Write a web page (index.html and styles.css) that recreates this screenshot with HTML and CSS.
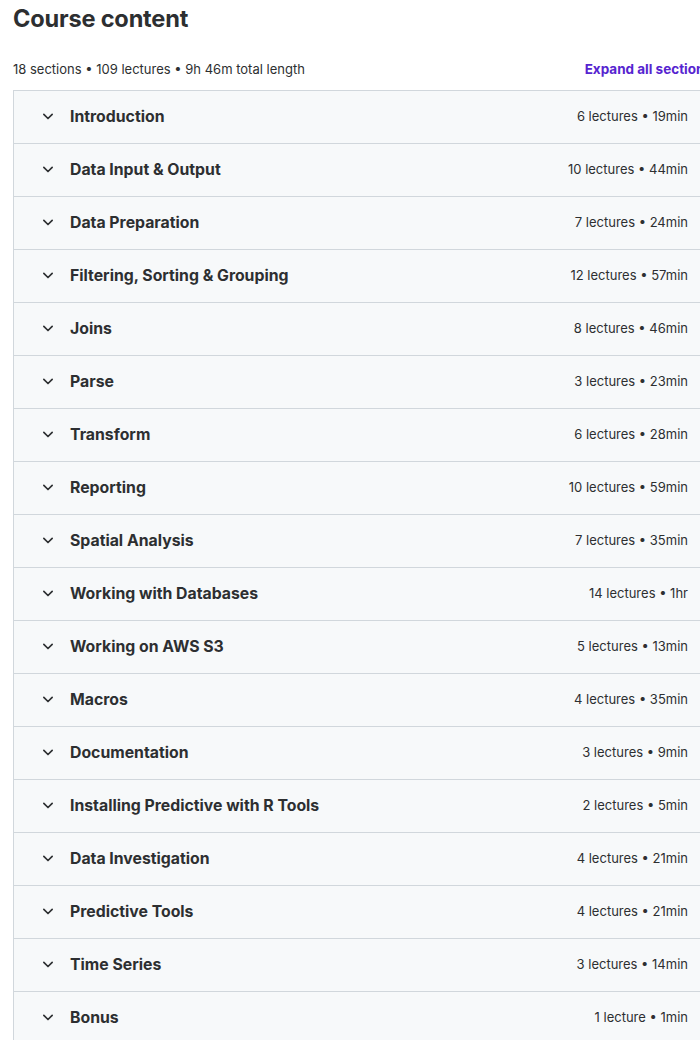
FILE: index.html
```html
<!DOCTYPE html>
<html>
<head>
<meta charset="utf-8">
<link rel="stylesheet" href="styles.css">
</head>
<body>
<div class="page">
  <h2 class="title">Course content</h2>
  <div class="summary">
    <span class="meta">18 sections • 109 lectures • 9h 46m total length</span>
    <button class="expand">Expand all sections</button>
  </div>
  <div class="accordion">
    <div class="row"><span class="chev"><svg viewBox="0 0 24 24"><path d="M7 10l5 5 5-5"/></svg></span><span class="name">Introduction</span><span class="info">6 lectures • 19min</span></div>
    <div class="row"><span class="chev"><svg viewBox="0 0 24 24"><path d="M7 10l5 5 5-5"/></svg></span><span class="name">Data Input &amp; Output</span><span class="info">10 lectures • 44min</span></div>
    <div class="row"><span class="chev"><svg viewBox="0 0 24 24"><path d="M7 10l5 5 5-5"/></svg></span><span class="name">Data Preparation</span><span class="info">7 lectures • 24min</span></div>
    <div class="row"><span class="chev"><svg viewBox="0 0 24 24"><path d="M7 10l5 5 5-5"/></svg></span><span class="name">Filtering, Sorting &amp; Grouping</span><span class="info">12 lectures • 57min</span></div>
    <div class="row"><span class="chev"><svg viewBox="0 0 24 24"><path d="M7 10l5 5 5-5"/></svg></span><span class="name">Joins</span><span class="info">8 lectures • 46min</span></div>
    <div class="row"><span class="chev"><svg viewBox="0 0 24 24"><path d="M7 10l5 5 5-5"/></svg></span><span class="name">Parse</span><span class="info">3 lectures • 23min</span></div>
    <div class="row"><span class="chev"><svg viewBox="0 0 24 24"><path d="M7 10l5 5 5-5"/></svg></span><span class="name">Transform</span><span class="info">6 lectures • 28min</span></div>
    <div class="row"><span class="chev"><svg viewBox="0 0 24 24"><path d="M7 10l5 5 5-5"/></svg></span><span class="name">Reporting</span><span class="info">10 lectures • 59min</span></div>
    <div class="row"><span class="chev"><svg viewBox="0 0 24 24"><path d="M7 10l5 5 5-5"/></svg></span><span class="name">Spatial Analysis</span><span class="info">7 lectures • 35min</span></div>
    <div class="row"><span class="chev"><svg viewBox="0 0 24 24"><path d="M7 10l5 5 5-5"/></svg></span><span class="name">Working with Databases</span><span class="info">14 lectures • 1hr</span></div>
    <div class="row"><span class="chev"><svg viewBox="0 0 24 24"><path d="M7 10l5 5 5-5"/></svg></span><span class="name">Working on AWS S3</span><span class="info">5 lectures • 13min</span></div>
    <div class="row"><span class="chev"><svg viewBox="0 0 24 24"><path d="M7 10l5 5 5-5"/></svg></span><span class="name">Macros</span><span class="info">4 lectures • 35min</span></div>
    <div class="row"><span class="chev"><svg viewBox="0 0 24 24"><path d="M7 10l5 5 5-5"/></svg></span><span class="name">Documentation</span><span class="info">3 lectures • 9min</span></div>
    <div class="row"><span class="chev"><svg viewBox="0 0 24 24"><path d="M7 10l5 5 5-5"/></svg></span><span class="name">Installing Predictive with R Tools</span><span class="info">2 lectures • 5min</span></div>
    <div class="row"><span class="chev"><svg viewBox="0 0 24 24"><path d="M7 10l5 5 5-5"/></svg></span><span class="name">Data Investigation</span><span class="info">4 lectures • 21min</span></div>
    <div class="row"><span class="chev"><svg viewBox="0 0 24 24"><path d="M7 10l5 5 5-5"/></svg></span><span class="name">Predictive Tools</span><span class="info">4 lectures • 21min</span></div>
    <div class="row"><span class="chev"><svg viewBox="0 0 24 24"><path d="M7 10l5 5 5-5"/></svg></span><span class="name">Time Series</span><span class="info">3 lectures • 14min</span></div>
    <div class="row"><span class="chev"><svg viewBox="0 0 24 24"><path d="M7 10l5 5 5-5"/></svg></span><span class="name">Bonus</span><span class="info">1 lecture • 1min</span></div>
  </div>
</div>
</body>
</html>
```

FILE: styles.css
```css
html, body {
  margin: 0;
  padding: 0;
  overflow: hidden;
  background: #ffffff;
}
body {
  font-family: Inter, "Noto Sans", sans-serif;
  color: #2d2f31;
}
.page {
  width: 699px;
  padding-left: 13px;
}
.title {
  margin: 0;
  padding-top: 4px;
  font-size: 23.6px;
  font-weight: 700;
  line-height: 30px;
  letter-spacing: -0.2px;
}
.summary {
  display: flex;
  justify-content: space-between;
  align-items: center;
  margin-top: 25px;
  height: 20px;
  margin-bottom: 11px;
}
.meta {
  font-size: 13px;
  color: #2d2f31;
}
.expand {
  border: 0;
  background: none;
  padding: 0;
  font-family: inherit;
  font-size: 13.5px;
  font-weight: 700;
  color: #5624d0;
  margin-right: 0;
  white-space: nowrap;
}
.accordion {
  border: 1px solid #d1d7dc;
  border-bottom: 0;
}
.row {
  box-sizing: border-box;
  display: flex;
  align-items: center;
  height: 53px;
  border-bottom: 1px solid #d1d7dc;
  background: #f7f9fa;
  padding: 0 23px 2px 24px;
}
.chev {
  width: 20px;
  height: 20px;
  display: flex;
  margin-right: 12px;
}
.chev svg {
  width: 20px;
  height: 20px;
  fill: none;
  stroke: #2d2f31;
  stroke-width: 2;
  stroke-linecap: round;
  stroke-linejoin: round;
}
.name {
  flex: 1;
  font-size: 15.8px;
  font-weight: 700;
}
.info {
  font-size: 13px;
  color: #2d2f31;
  white-space: nowrap;
}
```
